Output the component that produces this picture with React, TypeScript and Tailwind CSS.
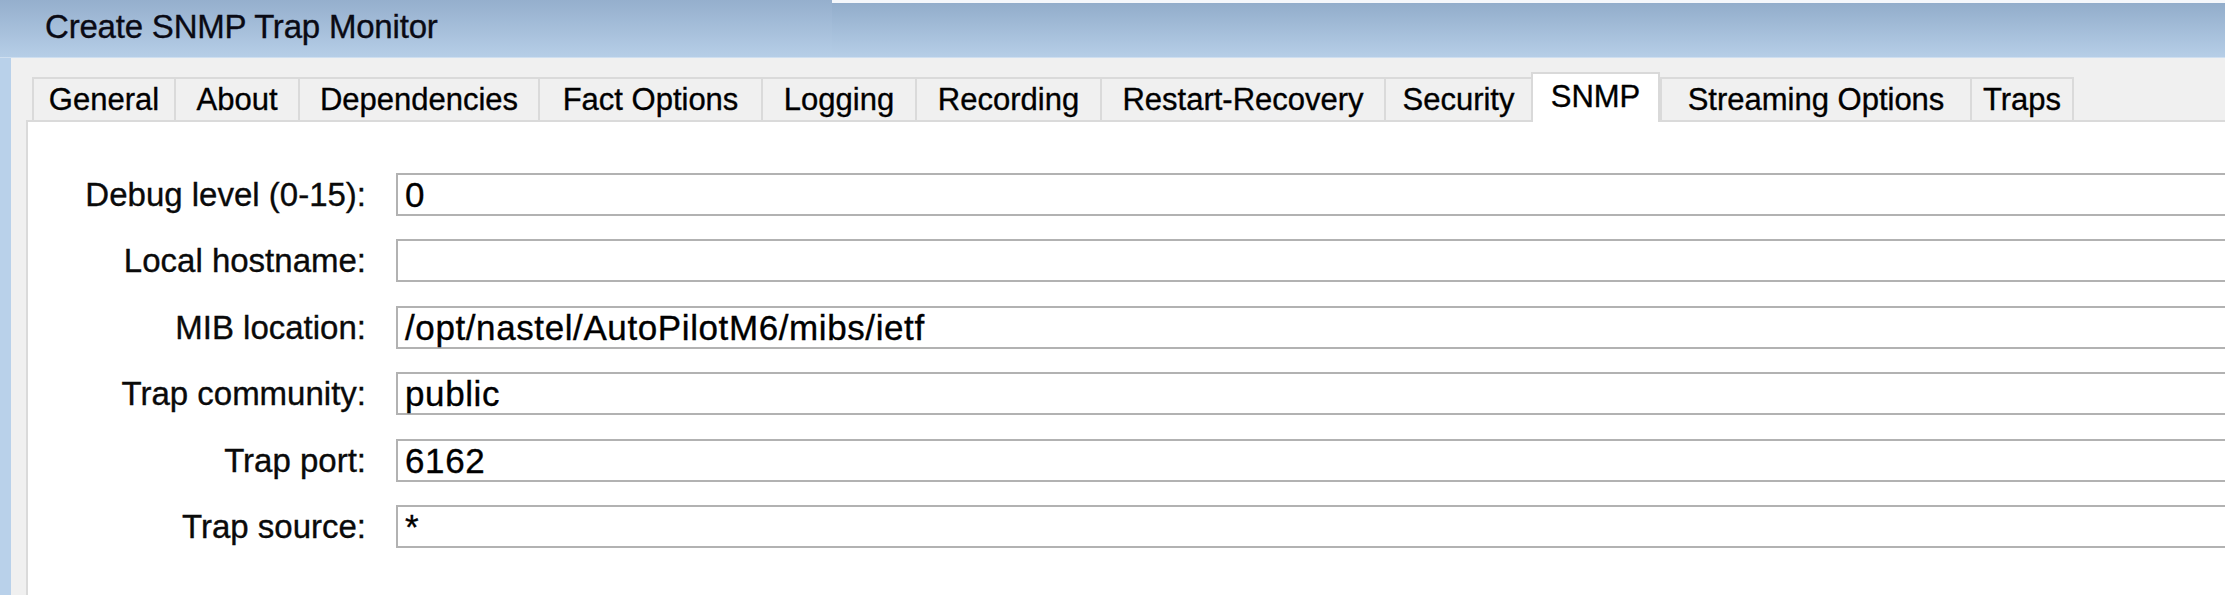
import React from "react";

const tabs = [
  { label: "General", w: "w-[142px]" },
  { label: "About", w: "w-[124px]" },
  { label: "Dependencies", w: "w-[240px]" },
  { label: "Fact Options", w: "w-[223px]" },
  { label: "Logging", w: "w-[154px]" },
  { label: "Recording", w: "w-[185px]" },
  { label: "Restart-Recovery", w: "w-[284px]" },
  { label: "Security", w: "w-[147px]" },
  { label: "SNMP", w: "w-[129px]", active: true },
  { label: "Streaming Options", w: "w-[310px]" },
  { label: "Traps", w: "w-[104px]", last: true },
];

const fields = [
  { label: "Debug level (0-15):", value: "0" },
  { label: "Local hostname:", value: "" },
  { label: "MIB location:", value: "/opt/nastel/AutoPilotM6/mibs/ietf" },
  { label: "Trap community:", value: "public" },
  { label: "Trap port:", value: "6162" },
  { label: "Trap source:", value: "*" },
];

const App = () => {
  return (
    <div className="flex h-[595px] w-[2225px] flex-col overflow-hidden bg-[#b9d1ea] font-['Liberation_Sans',Arial,sans-serif] text-black [-webkit-text-stroke:0.35px_currentColor]">
      {/* title bar */}
      <div className="flex h-[58px] shrink-0 border-b border-[#cfdff0]">
        <div className="w-[832px] bg-gradient-to-b from-[#95afcd] to-[#b6cee7] pl-[45px] pt-[10px]">
          <span className="block text-[33px] leading-none tracking-[-0.2px] text-[#0a0a14]">
            Create SNMP Trap Monitor
          </span>
        </div>
        <div className="flex-1 border-t-[3px] border-[#f4f7fb] bg-gradient-to-b from-[#92adcb] to-[#b6cee7]" />
      </div>

      {/* dialog body */}
      <div className="ml-[11px] flex flex-1 flex-col bg-[#f0f0f0]">
        {/* tab strip */}
        <div className="flex h-[62px] shrink-0 items-end pl-[21px]">
          {tabs.map((t) =>
            t.active ? (
              <div
                key={t.label}
                className={`${t.w} relative z-10 -mb-[2px] flex h-[50px] items-center justify-center border-x-2 border-t-2 border-[#d9d9d9] bg-white pb-[4px] text-[31px] leading-none`}
              >
                {t.label}
              </div>
            ) : (
              <div
                key={t.label}
                className={`${t.w} flex h-[43px] items-center justify-center border-l-2 border-t-2 border-[#dadada] bg-[#f0f0f0] text-[31px] leading-none ${t.last ? "border-r-2" : ""}`}
              >
                {t.label}
              </div>
            )
          )}
        </div>

        {/* panel */}
        <div className="ml-[15px] flex flex-1 flex-col gap-[23.4px] border-l-2 border-t-2 border-[#dadada] bg-white pt-[51px]">
          {fields.map((f) => (
            <div key={f.label} className="flex h-[43px] items-center">
              <span className="w-[338px] text-right text-[33px] leading-none text-[#0a0a0a]">
                {f.label}
              </span>
              <div className="ml-[30px] flex h-[43px] flex-1 items-center border-y-2 border-l-2 border-[#b2b2b2] bg-white pl-[7px] text-[35px] leading-none tracking-[0.6px]">
                {f.value}
              </div>
            </div>
          ))}
        </div>
      </div>
    </div>
  );
};

export default App;
